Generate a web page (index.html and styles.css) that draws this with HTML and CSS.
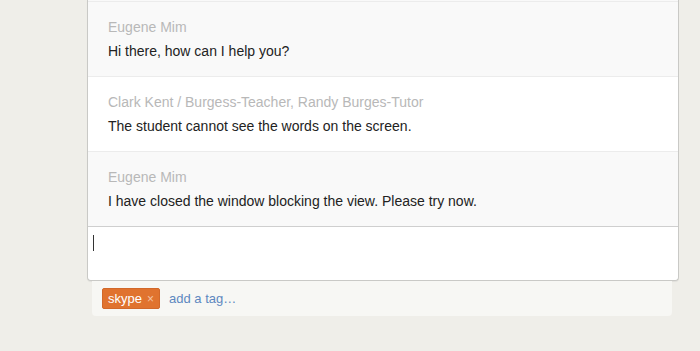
FILE: index.html
```html
<!DOCTYPE html>
<html>
<head>
  <title>Conversation</title>
  <link rel="stylesheet" href="styles.css">
</head>
<body>
  <div class="thread">
    <!-- Chat log -->
    <div class="log">
      <div class="msg shaded">
        <div class="author">Eugene Mim</div>
        <div class="text">Hi there, how can I help you?</div>
      </div>
      <div class="msg">
        <div class="author">Clark Kent / Burgess-Teacher, Randy Burges-Tutor</div>
        <div class="text">The student cannot see the words on the screen.</div>
      </div>
      <div class="msg shaded">
        <div class="author">Eugene Mim</div>
        <div class="text">I have closed the window blocking the view. Please try now.</div>
      </div>
    </div>
    <!-- Reply box -->
    <div class="reply"><span class="caret"></span></div>
  </div>

  <!-- Tags -->
  <div class="tags">
    <span class="tag">skype <span class="tag-x">&times;</span></span>
    <span class="add-tag">add a tag…</span>
  </div>
</body>
</html>
```

FILE: styles.css
```css
body {
  font-family: 'Liberation Sans', Arial, sans-serif;
  background-color: #efeee9;
  margin: 0;
  padding-left: 87px;
  width: 592px;
}
.thread {
  border: 1px solid #c9c9c6;
  border-top: none;
  border-radius: 0 0 4px 4px;
  box-shadow: 0 1px 1px rgba(0, 0, 0, 0.06);
  padding-top: 1px;
  background-color: #f9f9f9;
}
.log {
  border-top: 1px solid #ececec;
}
.msg {
  background-color: #fff;
  padding: 15px 20px 15px;
  border-bottom: 1px solid #ececec;
  font-size: 14px;
}
.msg:last-child {
  border-bottom: 1px solid #cfcfcf;
}
.shaded {
  background-color: #f9f9f9;
}
.author {
  color: #b8b8b8;
  line-height: 20px;
  margin-bottom: 4px;
}
.text {
  color: #222;
  line-height: 20px;
}
.reply {
  background-color: #fff;
  height: 53px;
  border-radius: 0 0 4px 4px;
  padding: 8px 5px;
  box-sizing: border-box;
}
.caret {
  display: block;
  width: 1px;
  height: 16px;
  background-color: #333;
}
.tags {
  margin-left: 5px;
  width: 580px;
  height: 35px;
  background-color: #f7f7f4;
  border-radius: 0 0 4px 4px;
  display: flex;
  align-items: center;
  gap: 9px;
  padding-left: 10px;
  box-sizing: border-box;
  font-size: 13px;
}
.tag {
  background-color: #e0732f;
  color: #fff;
  border: 1px solid #d2682a;
  border-radius: 2px;
  padding: 0 5px;
  height: 21px;
  box-sizing: border-box;
  display: flex;
  align-items: center;
  gap: 5px;
}
.tag-x {
  color: #f4c4a4;
  font-size: 12px;
}
.add-tag {
  color: #5e88c0;
}
```
